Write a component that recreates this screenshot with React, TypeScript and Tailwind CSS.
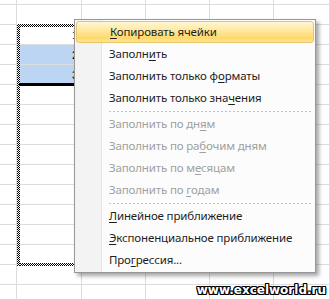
import React from "react";

type Item =
  | { sep: true }
  | { pre: string; u: string; post: string; active?: boolean; disabled?: boolean };

const items: Item[] = [
  { pre: "", u: "К", post: "опировать ячейки", active: true },
  { pre: "Заполн", u: "и", post: "ть" },
  { pre: "Заполнить только ф", u: "о", post: "рматы" },
  { pre: "Заполнить только зна", u: "ч", post: "ения" },
  { sep: true },
  { pre: "Заполнить по дн", u: "я", post: "м", disabled: true },
  { pre: "Заполнить по ра", u: "б", post: "очим дням", disabled: true },
  { pre: "Заполнить по м", u: "е", post: "сяцам", disabled: true },
  { pre: "Заполнить по ", u: "г", post: "одам", disabled: true },
  { sep: true },
  { pre: "", u: "Л", post: "инейное приближение" },
  { pre: "", u: "Э", post: "кспоненциальное приближение" },
  { pre: "Про", u: "г", post: "рессия..." },
];

const cols = [17, 65, 64, 64, 64, 56];
const rows = 15;

const checker =
  "bg-[repeating-conic-gradient(#000_0_25%,#fff_0_50%)] bg-[length:2px_2px]";

export default function App() {
  return (
    <div className="relative w-[330px] h-[299px] overflow-hidden bg-white font-['Segoe_UI','Noto_Sans',sans-serif]">
      {/* Sheet grid */}
      <div className="grid grid-cols-[17px_65px_64px_64px_64px_56px] grid-rows-[5px_repeat(15,20px)]">
        {Array.from({ length: rows + 1 }).map((_, r) =>
          cols.map((_, c) => {
            const blue = c === 1 && (r === 3 || r === 4);
            const num = c === 1 && r >= 2 && r <= 4 ? String(r - 1) : "";
            return (
              <div
                key={`${r}-${c}`}
                className={`border-r border-b border-[#dadcdd] flex items-end justify-end pr-[3px] pb-[3px] text-[11px] leading-none text-black font-['Liberation_Sans',sans-serif] ${
                  blue ? "bg-[#bcd5f3]" : ""
                }`}
              >
                {num}
              </div>
            );
          })
        )}
      </div>

      {/* Marching ants selection */}
      <div className="absolute left-[17px] top-[24px] w-[66px] h-[242px]">
        <div className={`absolute left-0 top-0 w-full h-[3px] ${checker}`} />
        <div className={`absolute left-0 bottom-0 w-full h-[3px] ${checker}`} />
        <div className={`absolute left-0 top-0 w-[3px] h-full ${checker}`} />
        <div className={`absolute right-0 top-0 w-[3px] h-full ${checker}`} />
      </div>
      <div className="absolute left-[19px] top-[83px] w-[60px] h-[3px] bg-black" />

      {/* Context menu */}
      <div className="absolute left-[74px] top-[19px] w-[242px] border border-[#979797] p-px shadow-[3px_3px_4px_rgba(0,0,0,0.35)] bg-[linear-gradient(90deg,#f3f3f3_0_26px,#e2e3e3_26px_27px,#ffffff_27px_28px,#fcfcfc_28px)]">
        {items.map((it, i) =>
          "sep" in it ? (
            <div key={i} className="h-[4px] flex items-center pl-[33px] pr-px">
              <div className="h-px w-full bg-[repeating-linear-gradient(90deg,#c2c2c2_0_2px,transparent_2px_4px)]" />
            </div>
          ) : (
            <div
              key={i}
              className={`h-[22px] flex items-center pl-[33px] text-[11.5px] tracking-[-0.15px] whitespace-nowrap rounded-[3px] ${
                it.active
                  ? "border border-[#e5c46a] bg-[linear-gradient(#fff6d3,#ffe79b_45%,#fdd96c_80%,#fee596)] pl-[32px]"
                  : ""
              } ${it.disabled ? "text-[#a0a0a0]" : "text-[#1e1e1e]"}`}
            >
              <span>
                {it.pre}
                <span className="underline underline-offset-[2px]">{it.u}</span>
                {it.post}
              </span>
            </div>
          )
        )}
      </div>

      {/* Watermark */}
      <div className="absolute right-[4px] bottom-[3px] text-[12px] leading-none font-bold text-white font-['DejaVu_Sans',sans-serif] [text-shadow:1px_0_0_#000,-1px_0_0_#000,0_1px_0_#000,0_-1px_0_#000,1px_1px_0_#000,-1px_-1px_0_#000,1px_-1px_0_#000,-1px_1px_0_#000]">
        www.excelworld.ru
      </div>
    </div>
  );
}
